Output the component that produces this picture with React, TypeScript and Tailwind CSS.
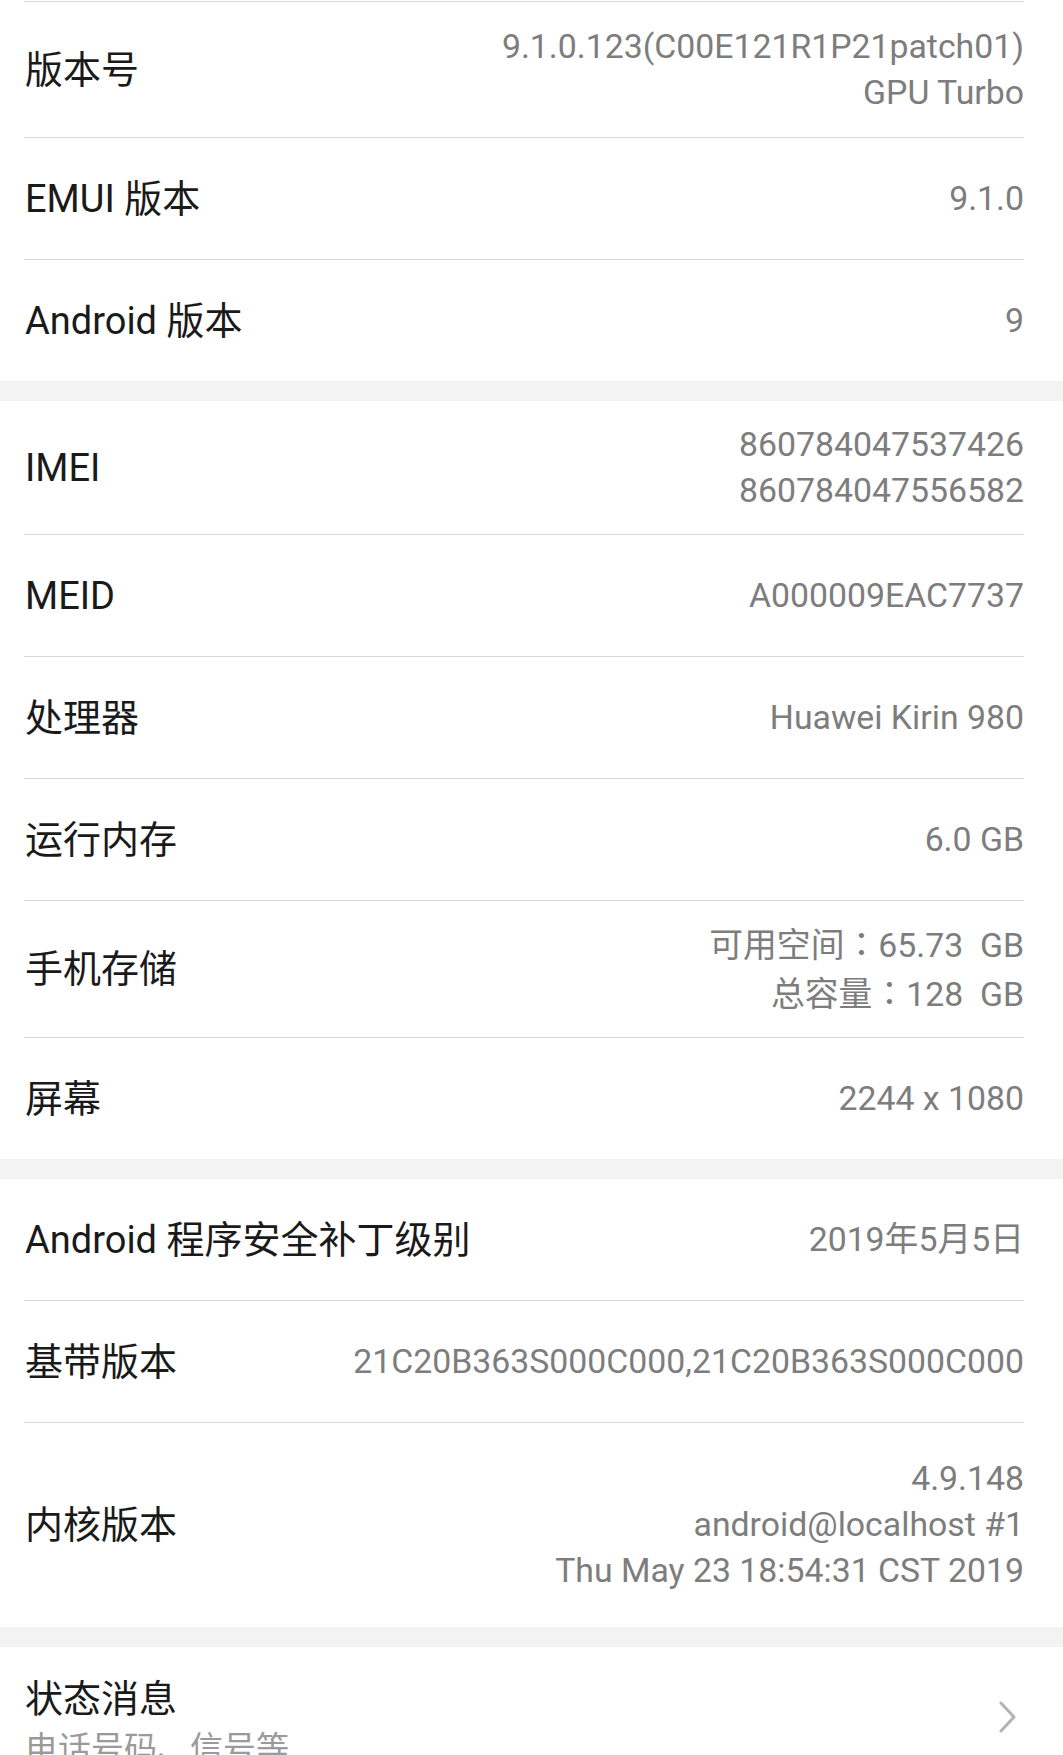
import React from "react";

interface InfoRow {
  label: string;
  value: React.ReactNode[];
  height: string;
  last?: boolean;
}

// full-width colon sits centred in the TC cut, like the phone's font
const Colon = () => <span style={{ fontFamily: '"Noto Sans CJK TC", sans-serif' }}>：</span>;

const sections: InfoRow[][] = [
  [
    { label: "版本号", value: ["9.1.0.123(C00E121R1P21patch01)", "GPU Turbo"], height: "h-[136px]" },
    { label: "EMUI 版本", value: ["9.1.0"], height: "h-[122px]" },
    { label: "Android 版本", value: ["9"], height: "h-[121px]", last: true },
  ],
  [
    { label: "IMEI", value: ["860784047537426", "860784047556582"], height: "h-[134px]" },
    { label: "MEID", value: ["A000009EAC7737"], height: "h-[122px]" },
    { label: "处理器", value: ["Huawei Kirin 980"], height: "h-[122px]" },
    { label: "运行内存", value: ["6.0 GB"], height: "h-[122px]" },
    {
      label: "手机存储",
      value: [
        <>可用空间<Colon />65.73  GB</>,
        <>总容量<Colon />128  GB</>,
      ],
      height: "h-[137px]",
    },
    { label: "屏幕", value: ["2244 x 1080"], height: "h-[121px]", last: true },
  ],
  [
    { label: "Android 程序安全补丁级别", value: ["2019年5月5日"], height: "h-[122px]" },
    { label: "基带版本", value: ["21C20B363S000C000,21C20B363S000C000"], height: "h-[122px]" },
    {
      label: "内核版本",
      value: ["4.9.148", "android@localhost #1", "Thu May 23 18:54:31 CST 2019"],
      height: "h-[204px]",
      last: true,
    },
  ],
];

const labelFont = { fontFamily: 'Roboto, "Noto Sans CJK SC", sans-serif' };
const valueFont = { fontFamily: 'Roboto, "Noto Sans CJK SC", sans-serif' };

function Row({ row }: { row: InfoRow }) {
  return (
    <div
      className={`ml-[24px] mr-[39px] flex items-center justify-between ${row.height} ${
        row.last ? "" : "border-b border-[#d9d9d9]"
      }`}
    >
      <div className="pl-[1px] text-[38px] leading-[48px] text-[#1a1a1a]">{row.label}</div>
      <div
        className="text-right text-[33.8px] leading-[46px] text-[#7d7d7d] whitespace-pre"
        style={valueFont}
      >
        {row.value.map((line, i) => (
          <div key={i}>{line}</div>
        ))}
      </div>
    </div>
  );
}

export default function App() {
  return (
    <div className="w-[1063px] h-[1755px] overflow-hidden bg-[#f3f3f3]" style={labelFont}>
      <div className="bg-white pt-[1px]">
        <div className="ml-[24px] mr-[39px] border-b border-[#d9d9d9]" />
        {sections[0].map((r) => (
          <Row key={r.label} row={r} />
        ))}
      </div>
      {sections.slice(1).map((sec, i) => (
        <div key={i} className="mt-[20px] bg-white">
          {sec.map((r) => (
            <Row key={r.label} row={r} />
          ))}
        </div>
      ))}
      <div className="mt-[20px] bg-white flex items-start justify-between pl-[25px] pr-[46px] pt-[28px] h-[200px]">
        <div>
          <div className="text-[38px] leading-[48px] text-[#1a1a1a]">状态消息</div>
          <div className="mt-[4px] text-[33px] leading-[44px] text-[#9a9a9a]">电话号码、信号等</div>
        </div>
        <svg width="18" height="32" viewBox="0 0 18 32" className="mt-[26px]">
          <path
            d="M2 2 L15 16 L2 30"
            fill="none"
            stroke="#b3b3b3"
            strokeWidth="3"
            strokeLinecap="round"
            strokeLinejoin="round"
          />
        </svg>
      </div>
    </div>
  );
}
